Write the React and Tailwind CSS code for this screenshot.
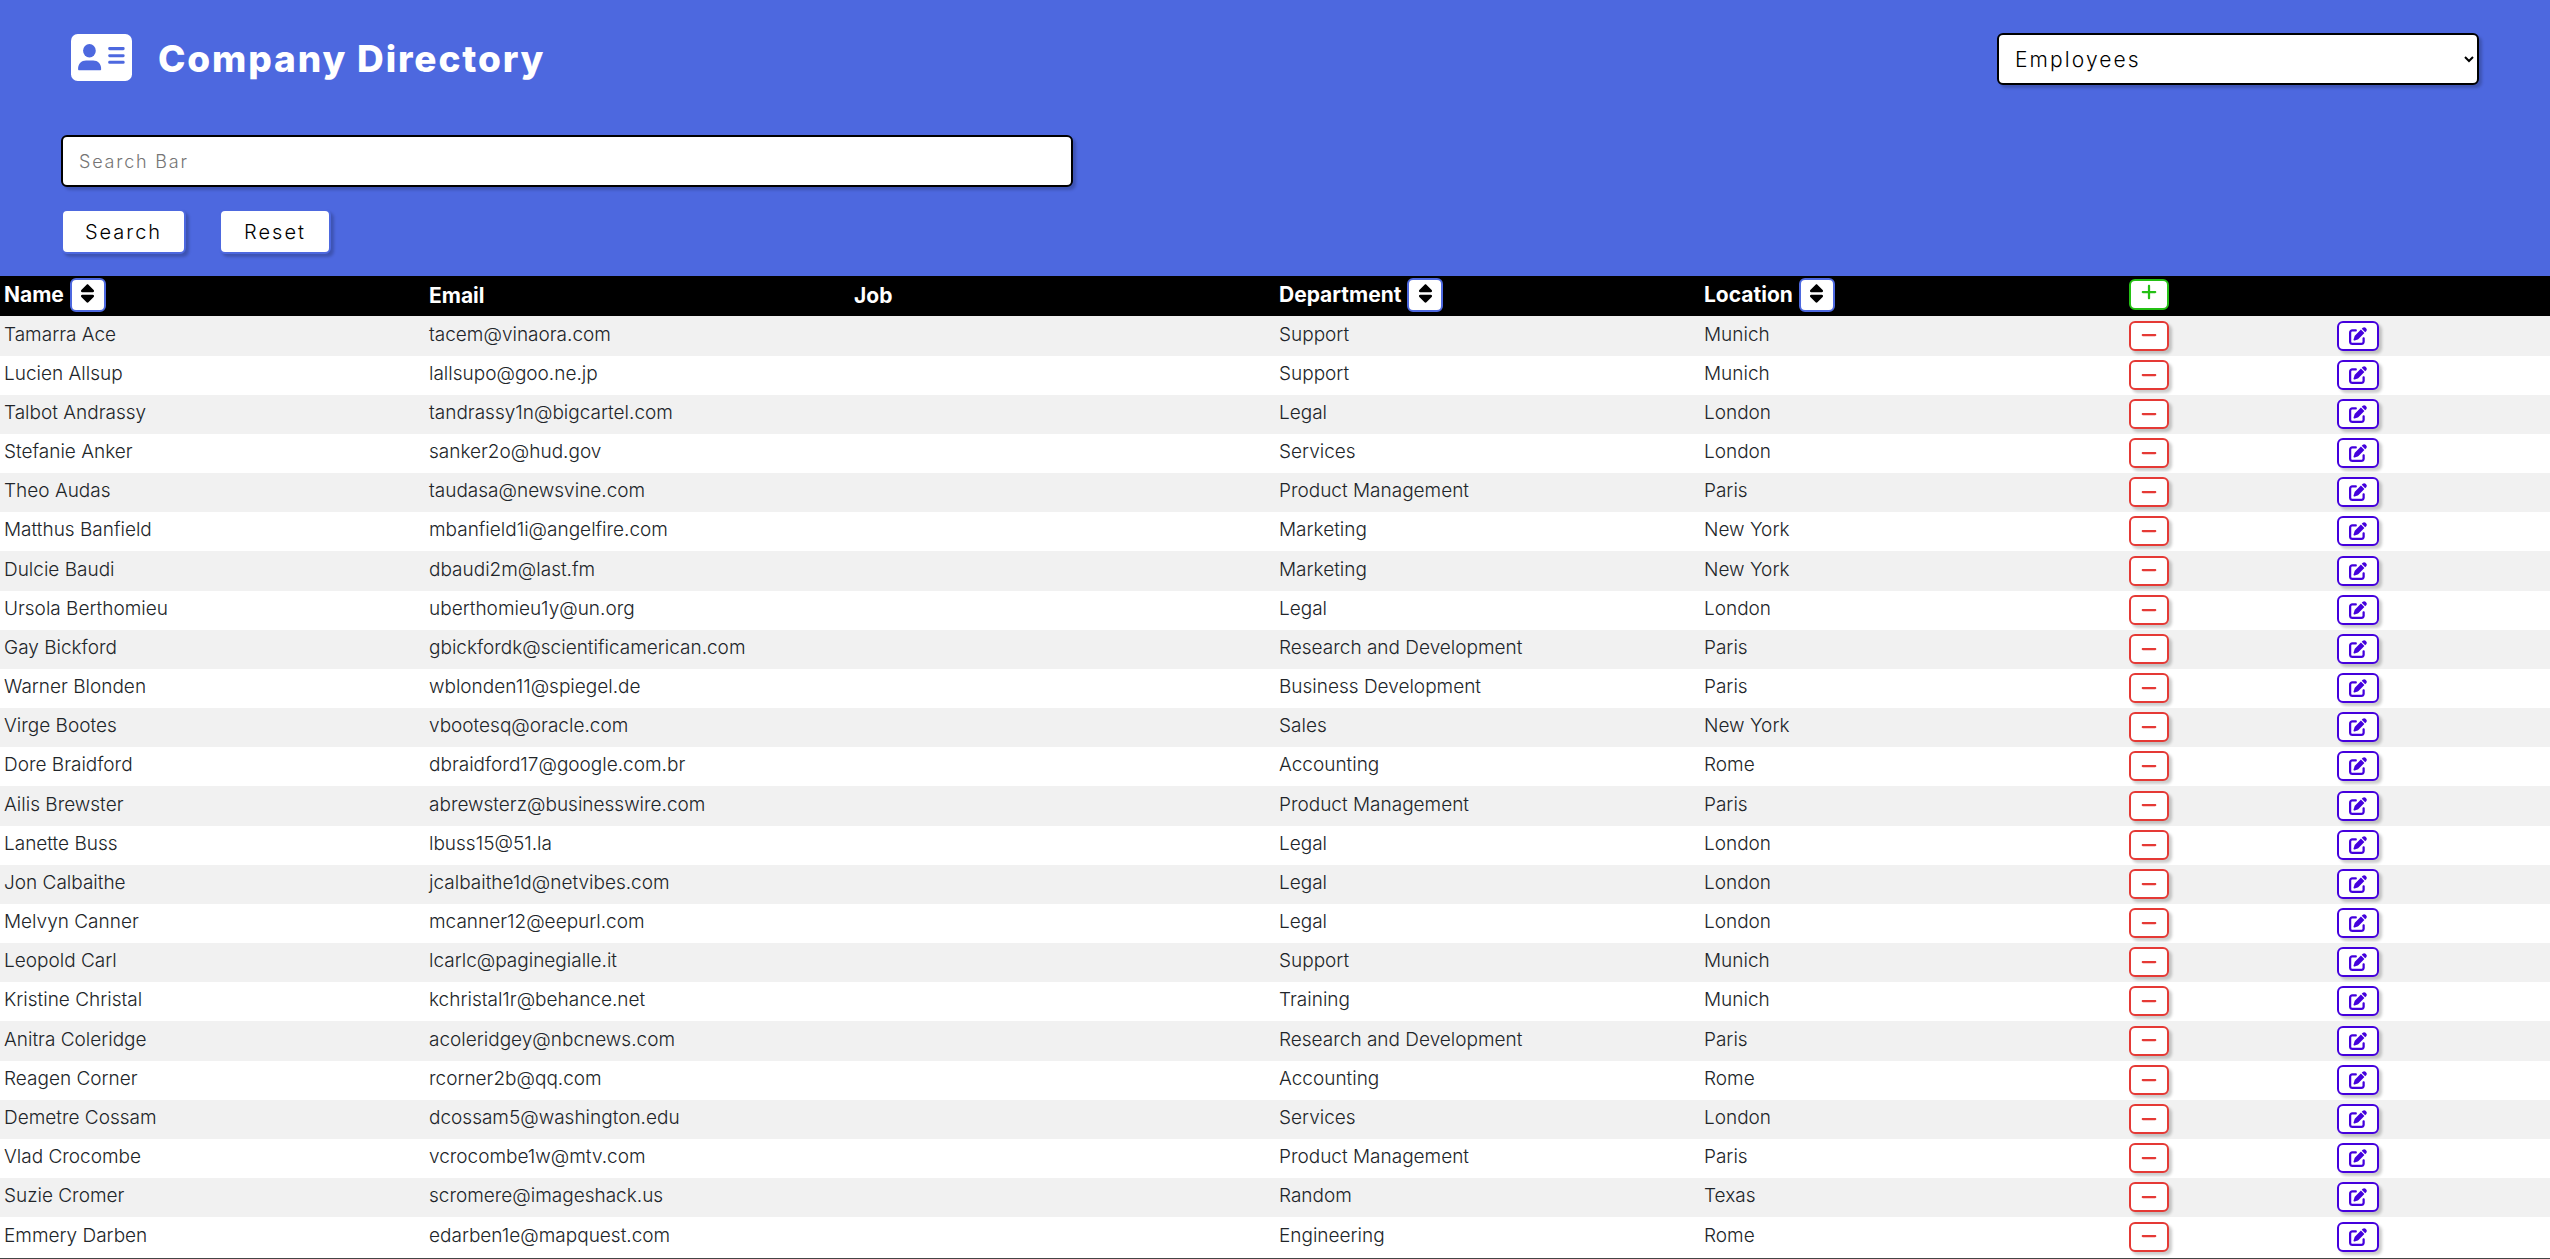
import { FaSort, FaPlus, FaMinus, FaPenToSquare } from "react-icons/fa6";

const employees = [
  ["Tamarra Ace", "tacem@vinaora.com", "Support", "Munich"],
  ["Lucien Allsup", "lallsupo@goo.ne.jp", "Support", "Munich"],
  ["Talbot Andrassy", "tandrassy1n@bigcartel.com", "Legal", "London"],
  ["Stefanie Anker", "sanker2o@hud.gov", "Services", "London"],
  ["Theo Audas", "taudasa@newsvine.com", "Product Management", "Paris"],
  ["Matthus Banfield", "mbanfield1i@angelfire.com", "Marketing", "New York"],
  ["Dulcie Baudi", "dbaudi2m@last.fm", "Marketing", "New York"],
  ["Ursola Berthomieu", "uberthomieu1y@un.org", "Legal", "London"],
  ["Gay Bickford", "gbickfordk@scientificamerican.com", "Research and Development", "Paris"],
  ["Warner Blonden", "wblonden11@spiegel.de", "Business Development", "Paris"],
  ["Virge Bootes", "vbootesq@oracle.com", "Sales", "New York"],
  ["Dore Braidford", "dbraidford17@google.com.br", "Accounting", "Rome"],
  ["Ailis Brewster", "abrewsterz@businesswire.com", "Product Management", "Paris"],
  ["Lanette Buss", "lbuss15@51.la", "Legal", "London"],
  ["Jon Calbaithe", "jcalbaithe1d@netvibes.com", "Legal", "London"],
  ["Melvyn Canner", "mcanner12@eepurl.com", "Legal", "London"],
  ["Leopold Carl", "lcarlc@paginegialle.it", "Support", "Munich"],
  ["Kristine Christal", "kchristal1r@behance.net", "Training", "Munich"],
  ["Anitra Coleridge", "acoleridgey@nbcnews.com", "Research and Development", "Paris"],
  ["Reagen Corner", "rcorner2b@qq.com", "Accounting", "Rome"],
  ["Demetre Cossam", "dcossam5@washington.edu", "Services", "London"],
  ["Vlad Crocombe", "vcrocombe1w@mtv.com", "Product Management", "Paris"],
  ["Suzie Cromer", "scromere@imageshack.us", "Random", "Texas"],
  ["Emmery Darben", "edarben1e@mapquest.com", "Engineering", "Rome"],
];

const shadow = "shadow-[3px_3px_3px_rgba(0,0,0,0.2)]";

function ContactCard({ className }) {
  return (
    <svg viewBox="0 0 182 140" className={className} aria-hidden="true">
      <rect width="182" height="140" rx="20" fill="currentColor" />
      <g fill="#4d68df">
        <ellipse cx="55" cy="50" rx="19" ry="20" />
        <path d="M21 104c0-15 10-25 24-25h21c14 0 24 10 24 25 0 2-1 4-4 4H25c-3 0-4-2-4-4z" />
        <rect x="111" y="39" width="49" height="9" rx="4" />
        <rect x="111" y="60" width="49" height="9" rx="4" />
        <rect x="111" y="80" width="49" height="9" rx="4" />
      </g>
    </svg>
  );
}

function SortHeading({ children }) {
  return (
    <th scope="col" className="px-1 py-0 pb-0.5 text-left align-middle">
      <div className="flex items-center gap-[6px]">
        <span>{children}</span>
        <button
          type="button"
          aria-label={`Sort by ${children}`}
          className="flex h-[34px] w-9 items-center justify-center rounded-md border-2 border-[#4d68df] bg-white pb-1 text-[21px] text-black"
        >
          <FaSort />
        </button>
      </div>
    </th>
  );
}

export default function App() {
  return (
    <div className="min-h-screen bg-white font-['Inter',sans-serif] text-[#212529]">
      <header className="bg-[#4d68df] px-[61px] pt-8 pb-[22px]">
        <div className="flex items-center justify-between px-[10px]">
          <div className="flex items-center gap-[26px] text-white">
            <ContactCard className="mb-1 h-[47px] w-[61px]" />
            <h1 className="text-[37px] leading-[54px] font-extrabold tracking-wider">Company Directory</h1>
          </div>
          <select
            aria-label="Directory section"
            className={`h-[52px] w-[482px] rounded-md border-2 border-black bg-white px-3 text-[21px] font-light tracking-widest text-black ${shadow}`}
          >
            <option>Employees</option>
          </select>
        </div>
        <form className="mt-[49px]" onSubmit={(e) => e.preventDefault()}>
          <input
            type="text"
            aria-label="Search Bar"
            placeholder="Search Bar"
            className={`block h-[52px] w-5/12 rounded-md border-2 border-black bg-white px-4 text-[18px] font-light tracking-widest placeholder:text-[#757575] ${shadow}`}
          />
          <div className="mt-[22px] flex gap-[33px]">
            <button
              type="submit"
              className={`h-[45px] w-[125px] rounded-md border-2 border-[#4d68df] bg-white text-[20px] font-light tracking-widest text-black ${shadow}`}
            >
              Search
            </button>
            <button
              type="button"
              className={`h-[45px] w-[112px] rounded-md border-2 border-[#4d68df] bg-white text-[20px] font-light tracking-widest text-black ${shadow}`}
            >
              Reset
            </button>
          </div>
        </form>
      </header>

      <table className="w-full table-fixed border-collapse border-b border-[#444] text-[19px]">
        <colgroup>
          <col className="w-1/6" />
          <col className="w-1/6" />
          <col className="w-1/6" />
          <col className="w-1/6" />
          <col className="w-1/6" />
          <col className="w-[208px]" />
          <col />
        </colgroup>
        <thead>
          <tr className="h-10 bg-black text-[21px] font-extrabold text-white">
            <SortHeading>Name</SortHeading>
            <th scope="col" className="px-1 py-0 text-left">Email</th>
            <th scope="col" className="px-1 py-0 text-left">Job</th>
            <SortHeading>Department</SortHeading>
            <SortHeading>Location</SortHeading>
            <th className="px-1 py-0 pb-1 align-middle">
              <button
                type="button"
                aria-label="Add employee"
                className="flex h-[31px] w-10 items-center justify-center rounded-md border-2 border-[#24c014] bg-white pb-1 text-[18px] text-[#24c014]"
              >
                <FaPlus />
              </button>
            </th>
            <th />
          </tr>
        </thead>
        <tbody>
          {employees.map(([name, email, department, location]) => (
            <tr key={email} className="h-[39px] font-light odd:bg-[#f1f1f1] nth-[6n+1]:h-10 last:h-[41px]">
              <td className="px-1 py-0 pb-0.5">{name}</td>
              <td className="px-1 py-0 pb-0.5">{email}</td>
              <td />
              <td className="px-1 py-0 pb-0.5">{department}</td>
              <td className="px-1 py-0 pb-0.5">{location}</td>
              <td className="px-1 py-0 pb-px">
                <button
                  type="button"
                  aria-label={`Delete ${name}`}
                  className={`flex h-[30px] w-10 items-center justify-center rounded-md border-2 border-[#e53935] bg-white pb-px text-[18px] text-[#e53935] ${shadow}`}
                >
                  <FaMinus />
                </button>
              </td>
              <td className="px-1 py-0 pb-px">
                <button
                  type="button"
                  aria-label={`Edit ${name}`}
                  className={`flex h-[30px] w-[42px] items-center justify-center rounded-md border-2 border-[#4400dd] bg-white text-[18px] text-[#4400dd] ${shadow}`}
                >
                  <FaPenToSquare />
                </button>
              </td>
            </tr>
          ))}
        </tbody>
      </table>
    </div>
  );
}
